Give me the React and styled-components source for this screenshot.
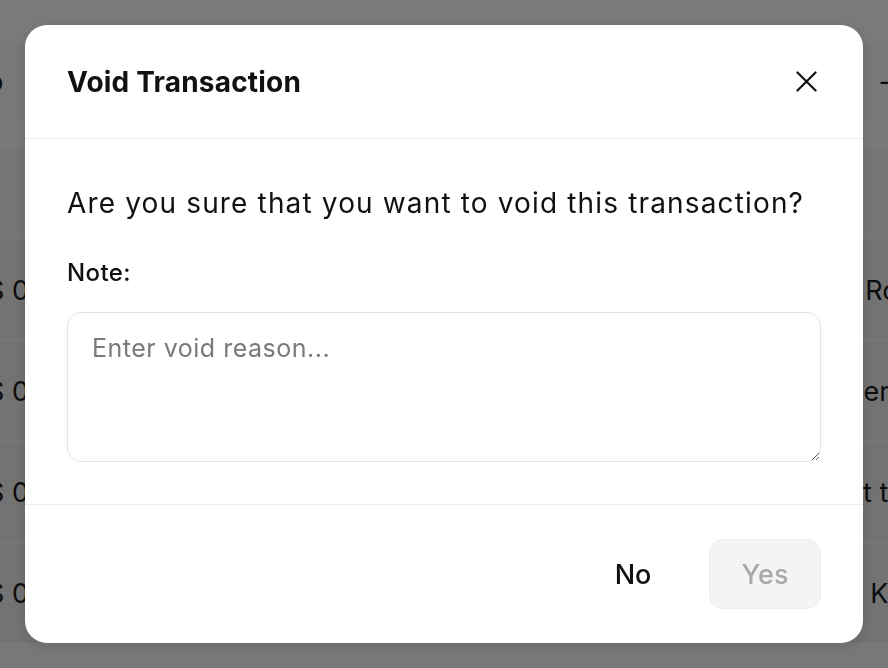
import React from 'react'
import styled, { createGlobalStyle } from 'styled-components'

const GlobalStyle = createGlobalStyle`
  * { box-sizing: border-box; }
  html, body { margin: 0; padding: 0; }
  body {
    font-family: Inter, "Noto Sans", "Liberation Sans", sans-serif;
    background: #f3f3f3;
    color: #111;
    overflow: hidden;
  }
`

const rows = [
  { id: 'US 00121', payer: 'Dr. Robert' },
  { id: 'US 00122', payer: 'Peter tan' },
  { id: 'US 00123', payer: 'Wet test' },
  { id: 'US 00124', payer: 'Mr. Kim' },
]

const App = () => {
  return (
    <>
      <GlobalStyle />
      <Page>
        <TopBar />
        <HeadRow>
          <IdCell>No</IdCell>
          <PayerCell>
            Tip<SortMark>–</SortMark>
          </PayerCell>
        </HeadRow>
        <FilterRow />
        <Spacer />
        {rows.map((r) => (
          <Row key={r.id}>
            <IdCell>{r.id}</IdCell>
            <PayerCell>{r.payer}</PayerCell>
          </Row>
        ))}
      </Page>

      <Overlay>
        <Modal>
          <Header>
            <Title>Void Transaction</Title>
            <CloseButton aria-label="Close">
              <svg width="21" height="21" viewBox="0 0 22 22" fill="none">
                <path d="M1.5 1.5L20.5 20.5M20.5 1.5L1.5 20.5" stroke="#111" strokeWidth="2.3" strokeLinecap="round" />
              </svg>
            </CloseButton>
          </Header>
          <Body>
            <Question>Are you sure that you want to void this transaction?</Question>
            <Label htmlFor="void-note">Note:</Label>
            <NoteInput id="void-note" placeholder="Enter void reason..." />
          </Body>
          <Footer>
            <GhostButton>No</GhostButton>
            <PrimaryButton disabled>Yes</PrimaryButton>
          </Footer>
        </Modal>
      </Overlay>
    </>
  )
}

const Page = styled.div`
  height: 668px;
  margin-left: -33px;
  display: flex;
  flex-direction: column;
  background: #f3f3f3;
`

const TopBar = styled.div`
  height: 45px;
  flex-shrink: 0;
  background: #f5f5f5;
  border-bottom: 1px solid #fafafa;
`

const Row = styled.div`
  height: 101px;
  flex-shrink: 0;
  display: flex;
  align-items: center;
  justify-content: space-between;
  background: #e6e6e6;
  border-bottom: 1px solid #f4f4f4;
  font-size: 27px;
  color: #1a1a1a;
`

const HeadRow = styled(Row)`
  height: 73px;
  background: #f0f0f0;
`

const FilterRow = styled.div`
  height: 34px;
  flex-shrink: 0;
  background: #f2f2f2;
  border-bottom: 1px solid #e6e6e6;
`

const Spacer = styled.div`
  height: 88px;
  flex-shrink: 0;
  background: #ededed;
  border-bottom: 1px solid #f7f7f7;
`

const IdCell = styled.div`
  white-space: nowrap;
`

const PayerCell = styled.div`
  width: 66px;
  white-space: nowrap;
  overflow: hidden;
`

const SortMark = styled.span`
  margin-left: 18px;
`

const Overlay = styled.div`
  position: fixed;
  inset: 0;
  background: rgba(0, 0, 0, 0.5);
  display: flex;
  align-items: center;
  justify-content: center;
`

const Modal = styled.div`
  width: 838px;
  height: 618px;
  background: #fff;
  border-radius: 22px;
  box-shadow: 0 4px 16px rgba(0, 0, 0, 0.12);
  display: flex;
  flex-direction: column;
  overflow: hidden;
`

const Header = styled.div`
  height: 114px;
  flex-shrink: 0;
  display: flex;
  align-items: center;
  justify-content: space-between;
  padding: 0 42px;
  border-bottom: 1px solid #ececec;
`

const Title = styled.h2`
  margin: 0;
  font-size: 28px;
  font-weight: 700;
  letter-spacing: 0.2px;
  color: #111;
`

const CloseButton = styled.button`
  width: 32px;
  height: 32px;
  padding: 0;
  margin-right: -1px;
  border: none;
  background: transparent;
  display: flex;
  align-items: center;
  justify-content: center;
  cursor: pointer;
`

const Body = styled.div`
  display: flex;
  flex-direction: column;
  padding: 44px 42px 42px;
  border-bottom: 1px solid #ececec;
`

const Question = styled.p`
  margin: 0;
  font-size: 28px;
  line-height: 40px;
  letter-spacing: 1.15px;
  color: #111;
`

const Label = styled.label`
  margin-top: 33px;
  font-size: 24px;
  line-height: 34px;
  font-weight: 500;
  letter-spacing: 0.4px;
  color: #111;
`

const NoteInput = styled.textarea`
  margin-top: 22px;
  width: 100%;
  height: 150px;
  padding: 19px 24px;
  border: 1.5px solid #e4e4e4;
  border-radius: 14px;
  font-family: inherit;
  font-size: 25px;
  line-height: 32px;
  letter-spacing: 0.5px;
  color: #111;
  outline: none;
  resize: vertical;
  &::placeholder {
    color: #7a7a7a;
  }
`

const Footer = styled.div`
  flex: 1;
  display: flex;
  align-items: center;
  justify-content: flex-end;
  gap: 20px;
  padding: 0 42px;
`

const GhostButton = styled.button`
  width: 112px;
  height: 70px;
  border: none;
  border-radius: 14px;
  background: transparent;
  font-family: inherit;
  font-size: 27px;
  font-weight: 500;
  color: #111;
  cursor: pointer;
`

const PrimaryButton = styled(GhostButton)`
  background: #f4f4f4;
  border: 1px solid #ededed;
  color: #a9a9a9;
  &:disabled {
    cursor: not-allowed;
  }
`

export default App
